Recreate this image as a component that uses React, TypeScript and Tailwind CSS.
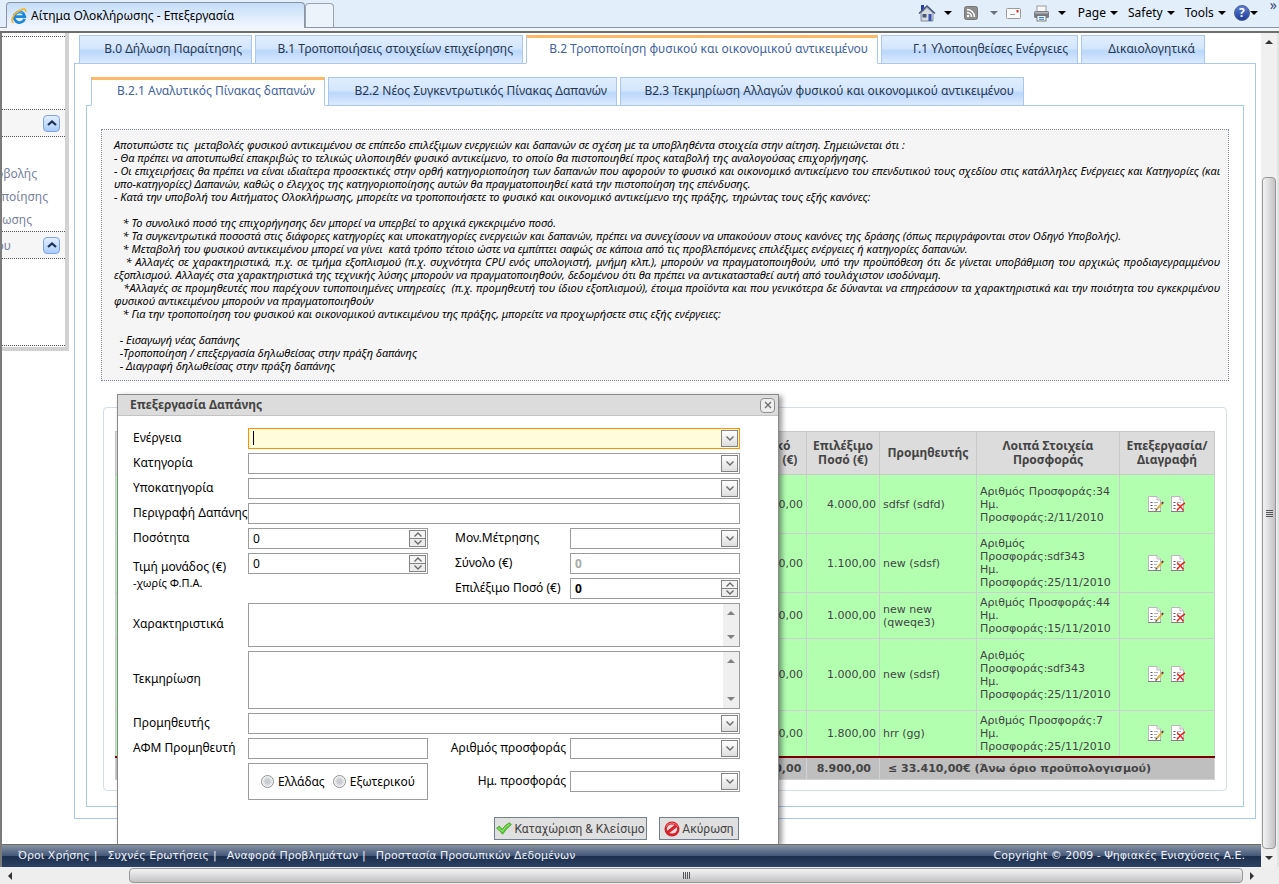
import * as React from "react";
import { clsx } from "clsx";

const mainTabs = [
  { label: "Β.0 Δήλωση Παραίτησης", width: "w-[173px]" },
  { label: "Β.1 Τροποποιήσεις στοιχείων επιχείρησης", width: "w-[268px]" },
  {
    label: "Β.2 Τροποποίηση φυσικού και οικονομικού αντικειμένου",
    width: "w-[352px]",
    active: true,
  },
  { label: "Γ.1 Υλοποιηθείσες Ενέργειες", width: "w-[197px]" },
  { label: "Δικαιολογητικά", width: "w-[124px]" },
];

const subTabs = [
  { label: "Β.2.1 Αναλυτικός Πίνακας δαπανών", width: "w-[234px]", active: true },
  { label: "Β2.2 Νέος Συγκεντρωτικός Πίνακας Δαπανών", width: "w-[289px]" },
  {
    label: "Β2.3 Τεκμηρίωση Αλλαγών φυσικού και οικονομικού αντικειμένου",
    width: "w-[404px]",
  },
];

const instructions = [
  "Αποτυπώστε τις  μεταβολές φυσικού αντικειμένου σε επίπεδο επιλέξιμων ενεργειών και δαπανών σε σχέση με τα υποβληθέντα στοιχεία στην αίτηση. Σημειώνεται ότι :",
  "- Θα πρέπει να αποτυπωθεί επακριβώς το τελικώς υλοποιηθέν φυσικό αντικείμενο, το οποίο θα πιστοποιηθεί προς καταβολή της αναλογούσας επιχορήγησης.",
  "- Οι επιχειρήσεις θα πρέπει να είναι ιδιαίτερα προσεκτικές στην ορθή κατηγοριοποίηση των δαπανών που αφορούν το φυσικό και οικονομικό αντικείμενο του επενδυτικού τους σχεδίου στις κατάλληλες Ενέργειες και Κατηγορίες (και υπο-κατηγορίες) Δαπανών, καθώς ο έλεγχος της κατηγοριοποίησης αυτών θα πραγματοποιηθεί κατά την πιστοποίηση της επένδυσης.",
  "- Κατά την υποβολή του Αιτήματος Ολοκλήρωσης, μπορείτε να τροποποιήσετε το φυσικό και οικονομικό αντικείμενο της πράξης, τηρώντας τους εξής κανόνες:",
  " ",
  "\u00a0\u00a0 * Το συνολικό ποσό της επιχορήγησης δεν μπορεί να υπερβεί το αρχικά εγκεκριμένο ποσό.",
  "\u00a0\u00a0 * Τα συγκεντρωτικά ποσοστά στις διάφορες κατηγορίες και υποκατηγορίες ενεργειών και δαπανών, πρέπει να συνεχίσουν να υπακούουν στους κανόνες της δράσης (όπως περιγράφονται στον Οδηγό Υποβολής).",
  "\u00a0\u00a0 * Μεταβολή του φυσικού αντικειμένου μπορεί να γίνει  κατά τρόπο τέτοιο ώστε να εμπίπτει σαφώς σε κάποια από τις προβλεπόμενες επιλέξιμες ενέργειες ή κατηγορίες δαπανών.",
  "\u00a0\u00a0 * Αλλαγές σε χαρακτηριστικά, π.χ. σε τμήμα εξοπλισμού (π.χ. συχνότητα CPU ενός υπολογιστή, μνήμη κλπ.), μπορούν να πραγματοποιηθούν, υπό την προϋπόθεση ότι δε γίνεται υποβάθμιση του αρχικώς προδιαγεγραμμένου εξοπλισμού. Αλλαγές στα χαρακτηριστικά της τεχνικής λύσης μπορούν να πραγματοποιηθούν, δεδομένου ότι θα πρέπει να αντικατασταθεί αυτή από τουλάχιστον ισοδύναμη.",
  "\u00a0\u00a0 *Αλλαγές σε προμηθευτές που παρέχουν τυποποιημένες υπηρεσίες  (π.χ. προμηθευτή του ίδιου εξοπλισμού), έτοιμα προϊόντα και που γενικότερα δε δύνανται να επηρεάσουν τα χαρακτηριστικά και την ποιότητα του εγκεκριμένου φυσικού αντικειμένου μπορούν να πραγματοποιηθούν",
  "\u00a0\u00a0 * Για την τροποποίηση του φυσικού και οικονομικού αντικειμένου της πράξης, μπορείτε να προχωρήσετε στις εξής ενέργειες:",
  " ",
  "\u00a0 - Εισαγωγή νέας δαπάνης",
  "\u00a0 -Τροποποίηση / επεξεργασία δηλωθείσας στην πράξη δαπάνης",
  "\u00a0 - Διαγραφή δηλωθείσας στην πράξη δαπάνης",
];

const expenses = [
  { amount: "4.000,00", supplier: "sdfsf (sdfd)", offer: "34", date: "2/11/2010", height: "h-[59px]" },
  { amount: "1.100,00", supplier: "new (sdsf)", offer: "sdf343", date: "25/11/2010", height: "h-[59px]" },
  { amount: "1.000,00", supplier: "new new (qweqe3)", offer: "44", date: "15/11/2010", height: "h-[46px]" },
  { amount: "1.000,00", supplier: "new (sdsf)", offer: "sdf343", date: "25/11/2010", height: "h-[72px]" },
  { amount: "1.800,00", supplier: "hrr (gg)", offer: "7", date: "25/11/2010", height: "h-[46px]" },
];

const footerLinks = [
  "Όροι Χρήσης",
  "Συχνές Ερωτήσεις",
  "Αναφορά Προβλημάτων",
  "Προστασία Προσωπικών Δεδομένων",
];

const Arrow = ({ dir = "down", className }: { dir?: "up" | "down" | "left" | "right"; className?: string }) => {
  const points = {
    up: "0,6 4,2 8,6",
    down: "0,2 8,2 4,6",
    left: "6,0 2,4 6,8",
    right: "2,0 6,4 2,8",
  };
  return (
    <svg viewBox="0 0 8 8" className={clsx("size-2 shrink-0", className)} fill="currentColor">
      <polygon points={points[dir]} />
    </svg>
  );
};

const Chevron = ({ up }: { up?: boolean }) => (
  <svg viewBox="0 0 8 5" className="w-2 h-[5px]" fill="none" stroke="#6b6b6b" strokeWidth="1.4">
    <path d={up ? "M0.5 4.5L4 1L7.5 4.5" : "M0.5 0.5L4 4L7.5 0.5"} />
  </svg>
);

const BrowserIcon = () => (
  <svg viewBox="0 0 16 16" className="size-4 shrink-0" fill="none">
    <path d="M13.6 10.800A5.300 5.300 0 1 1 13.800 8.700H4.500" stroke="#1d86d6" strokeWidth="2.700" />
    <path d="M4.500 6A4.500 4.500 0 0 1 11.500 5" stroke="#6cc3f2" strokeWidth="1" />
    <path d="M2.800 14.800C-1.500 13.500 2.500 5.500 8.500 2.500C12.500 .5 15.600 .4 14.600 4" stroke="#f2b52c" strokeWidth="1.600" />
  </svg>
);

const HomeIcon = () => (
  <svg viewBox="0 0 18 18" className="size-[18px]">
    <rect x="3" y="1" width="3" height="6" fill="#2a3fae" />
    <path d="M3 9L9 3.500L15 9V17H3z" fill="#d7dbe2" stroke="#6c7688" strokeWidth=".8" />
    <path d="M1 9.500L9 2L17 9.500" fill="none" stroke="#46597f" strokeWidth="1.600" />
    <rect x="4.500" y="10" width="4" height="3.500" fill="#4a5870" />
    <rect x="10.500" y="10" width="3" height="7" fill="#3850b4" />
  </svg>
);

const FeedIcon = () => (
  <svg viewBox="0 0 14 14" className="size-3.5">
    <rect x=".5" y=".5" width="13" height="13" rx="2" fill="#8d8d8d" stroke="#777" />
    <g fill="none" stroke="#fff" strokeWidth="1.500">
      <path d="M3 6.500A4.500 4.500 0 0 1 7.500 11M3 3.500A7.500 7.500 0 0 1 10.500 11" />
    </g>
    <circle cx="4" cy="10" r="1.200" fill="#fff" />
  </svg>
);

const MailIcon = () => (
  <svg viewBox="0 0 15 11" className="w-[15px] h-[11px]">
    <rect x=".5" y=".5" width="14" height="10" rx="1" fill="#fafafa" stroke="#9a9a9a" />
    <rect x="10.500" y="2" width="2" height="2.500" fill="#d4342c" />
    <path d="M4 6.500h5" stroke="#999" />
  </svg>
);

const PrinterIcon = () => (
  <svg viewBox="0 0 17 17" className="size-[17px]">
    <rect x="4" y="1" width="9" height="6" fill="#f7f7f7" stroke="#888" strokeWidth=".8" />
    <rect x="1" y="6" width="15" height="7" rx="1.500" fill="#7c7f84" />
    <rect x="2" y="7" width="13" height="1.500" fill="#b2b5b9" />
    <rect x="4" y="10.500" width="9" height="5.500" fill="#eef3f8" stroke="#666" strokeWidth=".8" />
    <path d="M6 12.500h5M6 14.300h5" stroke="#3b88c9" />
  </svg>
);

const HelpIcon = () => (
  <span className="size-4 rounded-full border border-[#4a5c8c] bg-gradient-to-b from-[#5d7ed0] to-[#1c3c9c] text-white text-[12px] leading-[14px] font-bold text-center">
    ?
  </span>
);

const PageIcon = ({ remove }: { remove?: boolean }) => (
  <svg viewBox="0 0 17 17" className="size-[17px]">
    <path d="M1.500 .5H10L13.500 4V15.500H1.500z" fill="#fff" stroke="#bdb5bf" />
    <path d="M10 .5V4H13.500" fill="#eee" stroke="#bdb5bf" />
    <path d="M1 15.500H14" stroke="#857c88" />
    <path d="M3.500 6.500h2M3.500 9.500h2M3.500 12.500h2" stroke="#5b4f86" strokeWidth="1.200" />
    <path d="M7 6.500h4M7 9.500h3M7 12.500h2" stroke="#b6b0bd" />
    {remove ? (
      <path d="M7 7.500C9.500 9.500 11.500 11.500 13.500 14.500M15 7C12 8.500 9.500 11 7 14.500" fill="none" stroke="#e2271c" strokeWidth="1.500" />
    ) : (
      <>
        <path d="M9.500 13.500L15.500 7" stroke="#dcae4a" strokeWidth="1.900" />
        <path d="M14.900 7.600L16.200 6.100" stroke="#6e3440" strokeWidth="1.900" />
        <path d="M8.600 14.500L9.800 13.200" stroke="#444" strokeWidth="1.300" />
      </>
    )}
  </svg>
);

const SaveIcon = () => (
  <svg viewBox="0 0 16 13" className="w-4 h-[13px] shrink-0">
    <path d="M.6 6.200L3.200 4.200Q5 5.500 6.200 7.200Q9.500 2.500 13.500 .8L15.400 2.600Q10.500 6 6.600 12.200Q4 8.500 .6 6.200z" fill="#5ecb33" stroke="#3c9a22" strokeWidth=".8" />
    <path d="M2 6Q4.500 7 6.200 9.500Q9.500 4 13.500 2.200" fill="none" stroke="#a4ea86" strokeWidth=".9" />
  </svg>
);

const CancelIcon = () => (
  <svg viewBox="0 0 16 16" className="size-4 shrink-0" fill="none">
    <circle cx="8" cy="8" r="7.500" fill="#d3232b" />
    <ellipse cx="8" cy="8" rx="5.200" ry="4.600" fill="#f3dada" />
    <path d="M3.500 11.500L12.500 4.500" stroke="#d3232b" strokeWidth="3" />
    <path d="M2 6A6.500 6.500 0 0 1 14 6" stroke="#f0777b" />
  </svg>
);

const ToolbarMenu = ({ label }: { label: string }) => (
  <button className="flex items-center gap-1 text-[12px] text-black">
    {label}
    <Arrow />
  </button>
);

const BrowserBar = () => (
  <header className="flex h-[33px] shrink-0 flex-col bg-[#e2eefa]">
    <div className="flex h-7 items-end border-b border-[#8b95a5] pl-[6px] font-['Noto_Sans','Open_Sans',sans-serif]">
      <div className="-mb-px flex h-[26px] w-[299px] items-center gap-1 rounded-t border border-b-0 border-[#8b95a5] bg-gradient-to-b from-[#c4ddf8] to-[#f3f7fd] pl-1 text-[12px] text-black">
        <BrowserIcon />
        Αίτημα Ολοκλήρωσης - Επεξεργασία
      </div>
      <button aria-label="New tab" className="h-6 w-[29px] rounded-t border border-b-0 border-[#9aa3b0] bg-[#ecf3fb]" />
      <div className="ml-auto flex h-7 items-center pr-[2px]">
        <button aria-label="Home" className="mr-2"><HomeIcon /></button>
        <Arrow className="mr-3" />
        <button aria-label="Feeds" className="mr-3"><FeedIcon /></button>
        <Arrow className="mr-2 text-gray-500" />
        <button aria-label="Read mail" className="mr-3"><MailIcon /></button>
        <button aria-label="Print" className="mr-2"><PrinterIcon /></button>
        <Arrow className="mr-3" />
        <div className="flex gap-[10px]">
          <ToolbarMenu label="Page" />
          <ToolbarMenu label="Safety" />
          <ToolbarMenu label="Tools" />
        </div>
        <button aria-label="Help" className="ml-2 flex items-center">
          <HelpIcon />
          <Arrow />
        </button>
        <span className="ml-3 self-start text-[14px] leading-3 text-[#3c4a78]">»</span>
      </div>
    </div>
    <div className="h-[3px] bg-[#f2f6fb]" />
    <div className="h-[2px] bg-[#6e6e6e]" />
  </header>
);

const SideHeading = ({ text }: { text: string }) => (
  <div className="flex h-7 items-center justify-end gap-8 border-y border-dotted border-[#555] bg-[#f6f6f6] pr-[5px]">
    <span>{text}</span>
    <button
      aria-label="Σύμπτυξη"
      className="flex size-[17px] shrink-0 items-center justify-center rounded-sm border border-[#7fa3e4] bg-gradient-to-b from-[#e4effd] to-[#a9cbf6]"
    >
      <svg viewBox="0 0 10 6" className="h-1.5 w-2.5" fill="none" stroke="#1c2f55" strokeWidth="2.2">
        <path d="M1 5L5 1.500L9 5" />
      </svg>
    </button>
  </div>
);

const Sidebar = () => (
  <aside className="mr-[5px] h-[318px] w-[67px] shrink-0 overflow-hidden whitespace-nowrap border-r-4 border-b-4 border-[#d2d2d2] pt-[3px] text-[12px] leading-[23px] text-[#77809c]">
    <div className="h-[73px] border-t border-dotted border-[#555]" />
    <SideHeading text="" />
    <nav className="flex flex-col items-end pt-[25px]">
      <a href="#submit" className="mr-[28px]">Υποβολής</a>
      <a href="#modify" className="mr-[17px]">Τροποποίησης</a>
      <a href="#complete" className="mr-[33px]">Ολοκλήρωσης</a>
    </nav>
    <SideHeading text="Έργου" />
    <div className="h-[87px] border-b border-dotted border-[#555]" />
  </aside>
);

const TabRow = ({ tabs, className }: { tabs: typeof mainTabs; className?: string }) => (
  <div role="tablist" className={clsx("-mb-px flex gap-[3px]", className)}>
    {tabs.map(({ label, width, active }) => (
      <button
        key={label}
        role="tab"
        aria-selected={!!active}
        className={clsx(
          "h-[29px] shrink-0 whitespace-nowrap border border-[#a9c8f0] pr-[9px] text-right text-[12px]",
          width,
          active
            ? "border-t-[3px] border-t-[#ffb866] border-b-white bg-white pb-1 text-[#41639f]"
            : "bg-[linear-gradient(#e0edfd_0%,#d5e7fd_45%,#bad7fb_55%,#dceafd_100%)] pb-[2px] text-[#27374f]"
        )}
      >
        {label}
      </button>
    ))}
  </div>
);

const ExpenseTable = () => (
  <table className="w-full table-fixed border-collapse bg-[#b2ffb0] font-['DejaVu_Sans',sans-serif] text-[11px] leading-[13px] text-[#444]">
    <colgroup>
      <col />
      <col className="w-[68px]" />
      <col className="w-[73px]" />
      <col className="w-[97px]" />
      <col className="w-[143px]" />
      <col className="w-[95px]" />
    </colgroup>
    <thead className="bg-[#dcdcdc] font-['Noto_Sans','Open_Sans',sans-serif] text-[12px] leading-[14px]">
      <tr className="h-[43px] [&>th]:border [&>th]:border-[#c9c9c9] [&>th]:font-bold">
        <th />
        <th>Ολικό<br />Ποσό (€)</th>
        <th>Επιλέξιμο<br />Ποσό (€)</th>
        <th>Προμηθευτής</th>
        <th>Λοιπά Στοιχεία<br />Προσφοράς</th>
        <th>Επεξεργασία/<br />Διαγραφή</th>
      </tr>
    </thead>
    <tbody>
      {expenses.map((item, i) => (
        <tr key={i} className={clsx(item.height, "[&>td]:border [&>td]:border-[#c9cfd2] [&>td]:px-[3px]")}>
          <td />
          <td className="text-right">{item.amount}</td>
          <td className="text-right">{item.amount}</td>
          <td>{item.supplier}</td>
          <td>
            Αριθμός Προσφοράς:{item.offer}
            <br />
            Ημ.
            <br />
            Προσφοράς:{item.date}
          </td>
          <td>
            <div className="flex justify-center gap-1.5">
              <button aria-label="Επεξεργασία"><PageIcon /></button>
              <button aria-label="Διαγραφή"><PageIcon remove /></button>
            </div>
          </td>
        </tr>
      ))}
    </tbody>
    <tfoot className="bg-[#bfbfbf] font-bold">
      <tr className="h-[23px] border-t-2 border-t-[#7c0000] [&>td]:border-x [&>td]:border-b [&>td]:border-[#cfd3d6]">
        <td />
        <td className="px-2 text-right">8.900,00</td>
        <td className="px-2 text-right">8.900,00</td>
        <td colSpan={3} className="px-2">≤ 33.410,00€ (Άνω όριο προϋπολογισμού)</td>
      </tr>
    </tfoot>
  </table>
);

const box = "border border-[#9c9c9c] bg-white";

const Combo = ({ id, focused, className }: { id: string; focused?: boolean; className?: string }) => (
  <div className={clsx("relative h-[21px]", className)}>
    <select
      id={id}
      className={clsx(
        "h-full w-full appearance-none border pl-1 outline-none",
        focused ? "border-[#ff8f00] bg-[#fffcdc]" : "border-[#9c9c9c] bg-white"
      )}
    >
      <option />
    </select>
    {focused && <span className="absolute top-[3px] left-[5px] h-[14px] w-px bg-black" />}
    <span className="pointer-events-none absolute top-[2px] right-[2px] flex h-[17px] w-[17px] items-center justify-center border border-[#838383] bg-gradient-to-b from-white to-[#dedede]">
      <Chevron />
    </span>
  </div>
);

const Spinner = ({ id, bold, className }: { id: string; bold?: boolean; className?: string }) => (
  <div className={clsx("flex h-[21px] p-px", box, className)}>
    <input id={id} defaultValue="0" className={clsx("min-w-0 flex-1 pl-[3px] outline-none", bold && "font-bold")} />
    <div className="flex w-[17px] flex-col border border-[#838383]">
      <button type="button" aria-label="Αύξηση" className="flex flex-1 items-center justify-center border-b border-[#838383] bg-[#f4f4f4]"><Chevron up /></button>
      <button type="button" aria-label="Μείωση" className="flex flex-1 items-center justify-center bg-[#ececec]"><Chevron /></button>
    </div>
  </div>
);

const TextBox = ({ id, className }: { id: string; className?: string }) => (
  <div className={clsx("flex", box, className)}>
    <textarea id={id} className="min-w-0 flex-1 resize-none overflow-hidden p-1 outline-none" />
    <div className="flex w-4 flex-col items-center justify-between bg-[#efefef] py-[5px] text-[#808080]">
      <Arrow dir="up" />
      <Arrow />
    </div>
  </div>
);

const EditDialog = () => (
  <form
    role="dialog"
    aria-labelledby="dialog-title"
    className="absolute top-[361px] left-[115px] w-[662px] border border-b-0 border-[#8a8a8a] bg-white text-[12px] leading-4 text-black shadow-[3px_2px_5px_rgba(0,0,0,0.4)]"
  >
    <div className="flex h-[21px] items-center justify-between border-b border-[#c3c3c3] bg-[#dcdcdc] pr-[3px] pl-3">
      <h2 id="dialog-title" className="font-bold text-[#444]">Επεξεργασία Δαπάνης</h2>
      <button type="button" aria-label="Κλείσιμο" className="flex size-[15px] items-center justify-center rounded-sm border border-[#8f8f8f] bg-[#eee]">
        <svg viewBox="0 0 8 8" className="size-2" stroke="#6e6e6e" strokeWidth="1.400">
          <path d="M1 1L7 7M7 1L1 7" />
        </svg>
      </button>
    </div>
    <div className="grid grid-cols-[115px_180px_142px_170px] items-center gap-y-1 pt-3 pl-[15px] [&>label]:pb-[2px]">
      <label htmlFor="action">Ενέργεια</label>
      <Combo id="action" focused className="col-span-3" />
      <label htmlFor="category">Κατηγορία</label>
      <Combo id="category" className="col-span-3" />
      <label htmlFor="subcategory">Υποκατηγορία</label>
      <Combo id="subcategory" className="col-span-3" />
      <label htmlFor="description" className="whitespace-nowrap">Περιγραφή Δαπάνης</label>
      <input id="description" className={clsx("col-span-3 h-[21px] px-1", box)} />
      <label htmlFor="quantity">Ποσότητα</label>
      <Spinner id="quantity" />
      <label htmlFor="unit" className="pl-[27px]">Μον.Μέτρησης</label>
      <Combo id="unit" />
      <label htmlFor="price" className="row-span-2">
        Τιμή μονάδος (€)
        <span className="block text-[11px]">-χωρίς Φ.Π.Α.</span>
      </label>
      <Spinner id="price" />
      <label htmlFor="total" className="pl-[27px]">Σύνολο (€)</label>
      <input id="total" disabled defaultValue="0" className={clsx("h-[21px] px-1 font-bold text-[#aaa]", box)} />
      <label htmlFor="eligible" className="col-start-3 pl-[27px] whitespace-nowrap">Επιλέξιμο Ποσό (€)</label>
      <Spinner id="eligible" bold />
      <label htmlFor="features">Χαρακτηριστικά</label>
      <TextBox id="features" className="col-span-3 h-11" />
      <label htmlFor="proof">Τεκμηρίωση</label>
      <TextBox id="proof" className="col-span-3 h-[58px]" />
      <label htmlFor="supplier">Προμηθευτής</label>
      <Combo id="supplier" className="col-span-3" />
      <label htmlFor="vat" className="whitespace-nowrap">ΑΦΜ Προμηθευτή</label>
      <input id="vat" className={clsx("h-[21px] px-1", box)} />
      <label htmlFor="offer" className="pr-1 text-right whitespace-nowrap">Αριθμός προσφοράς</label>
      <Combo id="offer" />
      <div className={clsx("col-start-2 flex h-[37px] items-center justify-center gap-2", box)}>
        {["Ελλάδας", "Εξωτερικού"].map((label) => (
          <label key={label} className="flex items-center gap-1">
            <input
              type="radio"
              name="origin"
              className="size-[13px] appearance-none rounded-full border border-[#8e8f8f] bg-[radial-gradient(#c9ccd0_30%,#fff_75%)]"
            />
            {label}
          </label>
        ))}
      </div>
      <label htmlFor="offer-date" className="pr-1 text-right">Ημ. προσφοράς</label>
      <Combo id="offer-date" />
    </div>
    <div className="flex justify-end gap-3 pt-[17px] pr-[39px] pb-1 font-[Roboto,sans-serif] whitespace-nowrap text-[#444]">
      <button type="button" className="flex h-[23px] w-[153px] items-center justify-center gap-0.5 border border-[#708090] bg-[#e0e0e0]">
        <SaveIcon />
        Καταχώριση &amp; Κλείσιμο
      </button>
      <button type="button" className="flex h-[23px] w-20 items-center justify-center gap-0.5 border border-[#708090] bg-[#e0e0e0]">
        <CancelIcon />
        Ακύρωση
      </button>
    </div>
  </form>
);

const Footer = () => (
  <footer className="relative flex h-[23px] shrink-0 items-center justify-between border-t border-[#6d6d66] bg-[linear-gradient(#8791a3_0%,#46597a_48%,#1d2f4e_52%,#2c4163_100%)] pr-4 pl-4 font-['DejaVu_Sans',sans-serif] text-[11px] text-[#eef1f5]">
    <div className="flex gap-[10px]">
      {footerLinks.map((link, i) => (
        <span key={link} className="flex gap-1">
          <a href="#footer">{link}</a>
          {i < footerLinks.length - 1 && <span>|</span>}
        </span>
      ))}
    </div>
    <span>Copyright © 2009 - Ψηφιακές Ενισχύσεις Α.Ε.</span>
  </footer>
);

const VerticalScrollbar = () => (
  <div className="flex w-[18px] shrink-0 flex-col items-center border-r-2 border-[#e3e3e3] bg-[#f0f0f0] text-[#333]">
    <Arrow dir="up" className="mt-[5px]" />
    <div className="mt-[131px] flex w-[14px] flex-1 flex-col items-center justify-center gap-px rounded-sm border border-[#979797] bg-gradient-to-r from-[#f3f3f3] via-[#dcdcde] to-[#c2c2c5]">
      {[0, 1, 2, 3].map((n) => (
        <span key={n} className="h-px w-[7px] bg-[#555]" />
      ))}
    </div>
    <Arrow className="my-[5px]" />
  </div>
);

const HorizontalScrollbar = () => (
  <div className="flex h-[17px] shrink-0 items-center bg-[#eeeeee] pr-[23px] pl-[6px] text-[#333]">
    <Arrow dir="left" />
    <div className="ml-[115px] flex h-[15px] flex-1 items-center justify-center gap-px rounded-sm border border-[#979797] bg-gradient-to-b from-[#f3f3f3] via-[#dcdcde] to-[#c2c2c5]">
      {[0, 1, 2, 3].map((n) => (
        <span key={n} className="h-[7px] w-px bg-[#555]" />
      ))}
    </div>
    <Arrow dir="right" className="ml-[5px]" />
  </div>
);

const App = () => {
  return (
    <div className="flex min-h-screen flex-col bg-white font-['Noto_Sans','Open_Sans',sans-serif]">
      <BrowserBar />
      <div className="flex flex-1 border-l-2 border-[#7b7b7b]">
        <div className="relative flex min-w-0 flex-1 flex-col overflow-hidden">
          <div className="flex flex-1">
            <Sidebar />
            <main className="min-w-0 flex-1 pt-[2px] pr-[5px] pb-6">
              <TabRow tabs={mainTabs} className="pl-[5px]" />
              <section className="border border-[#a9c8f0] px-[11px] pt-[13px] pb-[11px]">
                <TabRow tabs={subTabs} className="pl-[5px]" />
                <div className="border border-[#a9c8f0] px-[14px] pt-[23px] pb-[15px]">
                  <div className="border border-dotted border-[#7b8a9c] bg-[#f5f5f5] py-2 pr-2 pl-3 text-justify text-[11px] leading-[13px] whitespace-pre-wrap text-black italic">
                    {instructions.map((line, i) => (
                      <p key={i}>{line}</p>
                    ))}
                  </div>
                  <div className="mx-[2px] mt-[26px] rounded border border-[#d3dde6] px-[11px] pt-[23px] pb-[10px]">
                    <ExpenseTable />
                  </div>
                </div>
              </section>
            </main>
          </div>
          <EditDialog />
          <Footer />
        </div>
        <VerticalScrollbar />
      </div>
      <HorizontalScrollbar />
    </div>
  );
};

export default App;
